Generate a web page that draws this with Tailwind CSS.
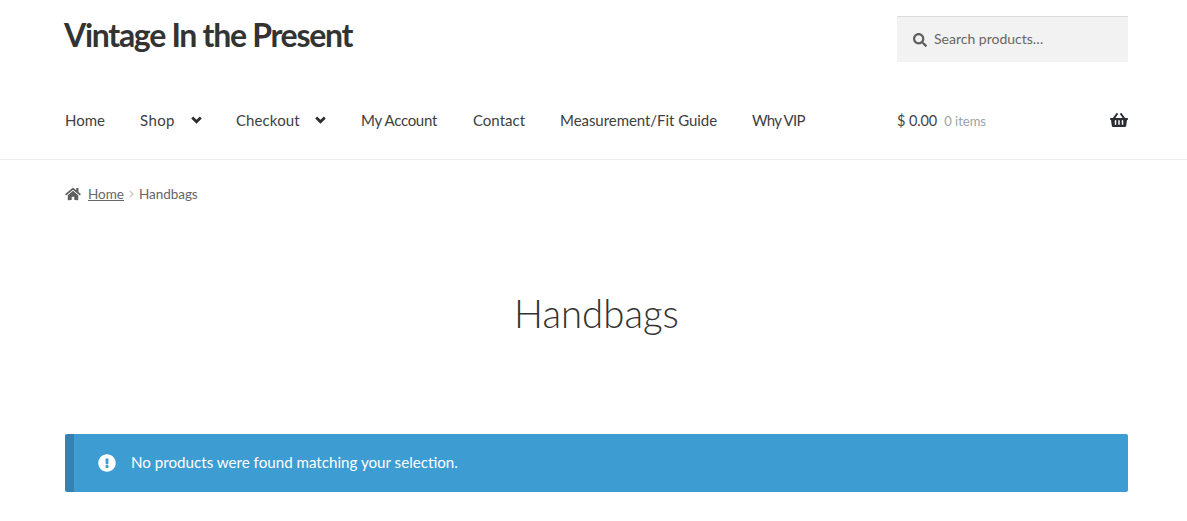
<!DOCTYPE html>
<html lang="en">
<head>
  <meta charset="UTF-8" />
  <title>Handbags</title>
  <script src="https://cdn.jsdelivr.net/npm/@tailwindcss/browser@4"></script>
</head>
<body class="bg-white h-[521px] overflow-hidden font-['Lato',sans-serif] text-[#43454b]">

  <header class="h-[160px] border-b border-[#eeeeee] pl-[65px] pr-[59px]">
    <div class="flex justify-between h-[62px] items-start pt-[16px]">
      <a class="text-[32px] leading-[38px] font-bold tracking-[-1.300px] text-[#333333] -ml-px">Vintage In the Present</a>
      <div class="w-[231px] h-[46px] bg-[#f2f2f2] border-t border-[#dddddd] flex items-center pl-[16px] gap-[7px]">
        <svg class="w-[14px] h-[14px]" viewBox="0 0 512 512"><path fill="#5f5f5f" d="M505 442.700L405.300 343c-4.500-4.500-10.600-7-17-7H372c27.600-35.300 44-79.700 44-128C416 93.100 322.900 0 208 0S0 93.100 0 208s93.100 208 208 208c48.300 0 92.700-16.400 128-44v16.300c0 6.400 2.500 12.500 7 17l99.700 99.700c9.400 9.400 24.600 9.400 33.900 0l28.300-28.300c9.400-9.400 9.400-24.600.1-34zM208 336c-70.700 0-128-57.200-128-128 0-70.700 57.200-128 128-128 70.700 0 128 57.200 128 128 0 70.700-57.200 128-128 128z"/></svg>
        <span class="text-[14px] leading-[18px] -mt-[2px] text-[#666666]">Search products…</span>
      </div>
    </div>
    <div class="flex justify-between items-center h-[54px] mt-[31px]">
      <nav class="flex items-center text-[15px] text-[#404040]">
        <a class="w-[75px]">Home</a>
        <a class="w-[96px] flex items-center gap-[16px] tracking-[0.400px]">Shop
          <svg class="w-[11px] h-[8px]" viewBox="0 0 11 8"><path d="M1.200 1.500 5.500 5.800 9.800 1.500" fill="none" stroke="#2c2d33" stroke-width="2.700"/></svg>
        </a>
        <a class="w-[125px] flex items-center gap-[15px] tracking-[0.100px]">Checkout
          <svg class="w-[11px] h-[8px]" viewBox="0 0 11 8"><path d="M1.200 1.500 5.500 5.800 9.800 1.500" fill="none" stroke="#2c2d33" stroke-width="2.700"/></svg>
        </a>
        <a class="w-[112px] tracking-[-0.300px]">My Account</a>
        <a class="w-[87px]">Contact</a>
        <a class="w-[192px] tracking-[-0.050px]">Measurement/Fit Guide</a>
        <a class="tracking-[-0.700px]">Why VIP</a>
      </nav>
      <div class="w-[231px] flex items-center justify-between">
        <div class="flex items-baseline gap-[7px] mt-[1px]">
          <span class="text-[14.500px] text-[#43454b] tracking-[-0.100px]">$ 0.00</span>
          <span class="text-[13px] text-[#9aa3a8]">0 items</span>
        </div>
        <svg class="w-[18px] h-[16px]" viewBox="0 0 576 512"><path fill="#2c2d33" d="M576 216v16c0 13.300-10.700 24-24 24h-8l-26.100 182.800C514.500 462.400 494.200 480 470.300 480H105.700c-23.900 0-44.200-17.600-47.500-41.200L32 256h-8c-13.300 0-24-10.700-24-24v-16c0-13.300 10.700-24 24-24h67.300l106.800-146.800c10.400-14.300 30.400-17.500 44.700-7.100 14.300 10.400 17.500 30.400 7.100 44.700L170.400 192h235.200L326.100 82.800c-10.400-14.300-7.200-34.300 7.100-44.700 14.300-10.400 34.300-7.200 44.700 7.100L484.700 192H552c13.300 0 24 10.700 24 24zM312 392V280c0-13.300-10.700-24-24-24s-24 10.700-24 24v112c0 13.300 10.700 24 24 24s24-10.700 24-24zm112 0V280c0-13.300-10.700-24-24-24s-24 10.700-24 24v112c0 13.300 10.700 24 24 24s24-10.700 24-24zm-224 0V280c0-13.300-10.700-24-24-24s-24 10.700-24 24v112c0 13.300 10.700 24 24 24s24-10.700 24-24z"/></svg>
      </div>
    </div>
  </header>

  <main class="pl-[65px] pr-[59px]">
    <div class="flex items-center h-[20px] mt-[24px] text-[13.500px] text-[#666666]">
      <svg class="w-[16px] h-[14px] mr-[7px]" viewBox="0 0 576 512"><path fill="#5f5f5f" d="M280.400 148.300L96 300.100V464a16 16 0 0 0 16 16l112.100-.3a16 16 0 0 0 15.900-16V368a16 16 0 0 1 16-16h64a16 16 0 0 1 16 16v95.600a16 16 0 0 0 16 16.100L464 480a16 16 0 0 0 16-16V300L295.700 148.300a12.200 12.200 0 0 0-15.300 0zM571.600 251.500L488 182.600V44.100a12 12 0 0 0-12-12h-56a12 12 0 0 0-12 12v72.600L318.500 43a48 48 0 0 0-61 0L4.300 251.500a12 12 0 0 0-1.600 16.900l25.500 31A12 12 0 0 0 45.200 301l235.200-193.700a12.200 12.200 0 0 1 15.300 0L530.900 301a12 12 0 0 0 16.900-1.600l25.500-31a12 12 0 0 0-1.700-16.900z"/></svg>
      <a class="underline">Home</a>
      <svg class="w-[5px] h-[8px] mx-[5px]" viewBox="0 0 5 8"><path d="M1 1 4 4 1 7" fill="none" stroke="#c8c8c0" stroke-width="1.300"/></svg>
      <span class="tracking-[-0.050px]">Handbags</span>
    </div>

    <h1 class="text-center text-[38.400px] leading-[46px] font-light text-[#333333] mt-[86px]">Handbags</h1>

    <div class="mt-[98px] h-[58px] bg-[#3d9cd2] border-l-[9px] border-[#3582b0] rounded-[2px] flex items-center pl-[24px] text-white">
      <svg class="w-[18px] h-[18px] mr-[15px]" viewBox="0 0 512 512"><path fill="#ffffff" d="M504 256c0 137-111 248-248 248S8 393 8 256 119 8 256 8s248 111 248 248zm-248 50c-25.400 0-46 20.600-46 46s20.600 46 46 46 46-20.600 46-46-20.600-46-46-46zm-43.700-165.300l7.400 136c.3 6.400 5.600 11.300 12 11.300h48.500c6.400 0 11.600-5 12-11.300l7.400-136c.4-6.900-5.100-12.700-12-12.700h-63.400c-6.900 0-12.400 5.800-12 12.700z"/></svg>
      <span class="text-[15.150px] leading-[20px] -mt-[2px]">No products were found matching your selection.</span>
    </div>
  </main>

</body>
</html>
